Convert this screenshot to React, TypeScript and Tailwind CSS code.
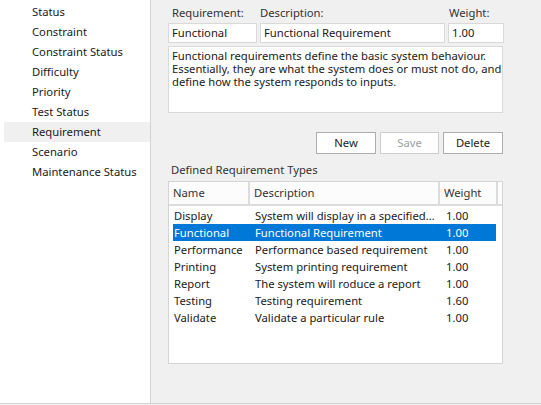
import { useState } from 'react';

const categories = [
  'Status',
  'Constraint',
  'Constraint Status',
  'Difficulty',
  'Priority',
  'Test Status',
  'Requirement',
  'Scenario',
  'Maintenance Status',
];

const types = [
  { name: 'Display', desc: 'System will display in a specified format', weight: '1.00' },
  { name: 'Functional', desc: 'Functional Requirement', weight: '1.00' },
  { name: 'Performance', desc: 'Performance based requirement', weight: '1.00' },
  { name: 'Printing', desc: 'System printing requirement', weight: '1.00' },
  { name: 'Report', desc: 'The system will roduce a report', weight: '1.00' },
  { name: 'Testing', desc: 'Testing requirement', weight: '1.60' },
  { name: 'Validate', desc: 'Validate a particular rule', weight: '1.00' },
];

export default function App() {
  const [selected, setSelected] = useState('Functional');

  return (
    <div
      className="flex w-[541px] h-[405px] bg-[#f0f0f0] text-[11.25px] text-[#1a1a1a] overflow-hidden"
      style={{ fontFamily: '"Noto Sans", "Open Sans", sans-serif' }}
    >
      {/* Category list */}
      <div className="w-[151px] h-[404px] bg-white border-r border-b border-[#d4d4d4] pt-[2px] flex flex-col">
        {categories.map(c => (
          <div
            key={c}
            className={`ml-[4px] h-[20px] leading-[20px] pl-[28px] ${c === 'Requirement' ? 'bg-[#f0f0f0]' : ''}`}
          >
            {c}
          </div>
        ))}
      </div>

      {/* Detail panel */}
      <div className="flex-1 h-[404px] border-b border-[#d4d4d4] pl-[17px] pt-[4px]">
        {/* Field labels */}
        <div className="flex h-[19px] items-center text-[#333]">
          <div className="w-[92px] pl-[4px]">Requirement:</div>
          <div className="w-[187px]">Description:</div>
          <div className="pl-[2px]">Weight:</div>
        </div>

        {/* Inputs */}
        <div className="flex gap-[3px] h-[20px]">
          <div className="w-[89px] bg-white border border-[#d9d9d9] px-[3px] leading-[18px]">Functional</div>
          <div className="w-[185px] bg-white border border-[#d9d9d9] px-[3px] leading-[18px]">Functional Requirement</div>
          <div className="w-[56px] bg-white border border-[#d9d9d9] px-[3px] leading-[18px]">1.00</div>
        </div>

        {/* Notes */}
        <div className="mt-[3px] w-[335px] h-[67px] bg-white border border-[#d9d9d9] px-[3px] pt-[2px] leading-[13px] whitespace-nowrap">
          Functional requirements define the basic system behaviour.
          <br />
          Essentially, they are what the system does or must not do, and
          <br />
          define how the system responds to inputs.
        </div>

        {/* Buttons */}
        <div className="mt-[19px] w-[335px] flex justify-end gap-[4px]">
          <button className="w-[60px] h-[22px] bg-white border border-[#adadad]">New</button>
          <button className="w-[59px] h-[22px] bg-white border border-[#cccccc] text-[#a0a0a0]">Save</button>
          <button className="w-[60px] h-[22px] bg-white border border-[#adadad]">Delete</button>
        </div>

        <div className="mt-[7px] h-[18px] leading-[18px] pl-[3px] text-[#333]">Defined Requirement Types</div>

        {/* Table */}
        <div className="mt-[2px] w-[335px] h-[183px] bg-white border border-[#d4d4d4]">
          <div className="flex h-[24px] border-b-2 border-[#dcdcdc] bg-[#fcfcfc] text-[#333]">
            <div className="w-[81px] border-r-2 border-[#dcdcdc] pl-[4px] leading-[22px]">Name</div>
            <div className="w-[190px] border-r-2 border-[#dcdcdc] pl-[4px] leading-[22px]">Description</div>
            <div className="w-[58px] border-r-2 border-[#dcdcdc] pl-[4px] leading-[22px]">Weight</div>
          </div>
          <div className="pt-[1px] pl-[4px] pr-[6px]">
            {types.map(t => {
              const active = t.name === selected;
              return (
                <div
                  key={t.name}
                  onClick={() => setSelected(t.name)}
                  className={`flex h-[17px] leading-[17px] ${active ? 'bg-[#0078d7] text-white' : ''}`}
                >
                  <div className="w-[81px] pl-[1px]">{t.name}</div>
                  <div className="w-[191px] pl-[1px] pr-[8px] truncate">{t.desc}</div>
                  <div className="pl-[1px]">{t.weight}</div>
                </div>
              );
            })}
          </div>
        </div>
      </div>
    </div>
  );
}
